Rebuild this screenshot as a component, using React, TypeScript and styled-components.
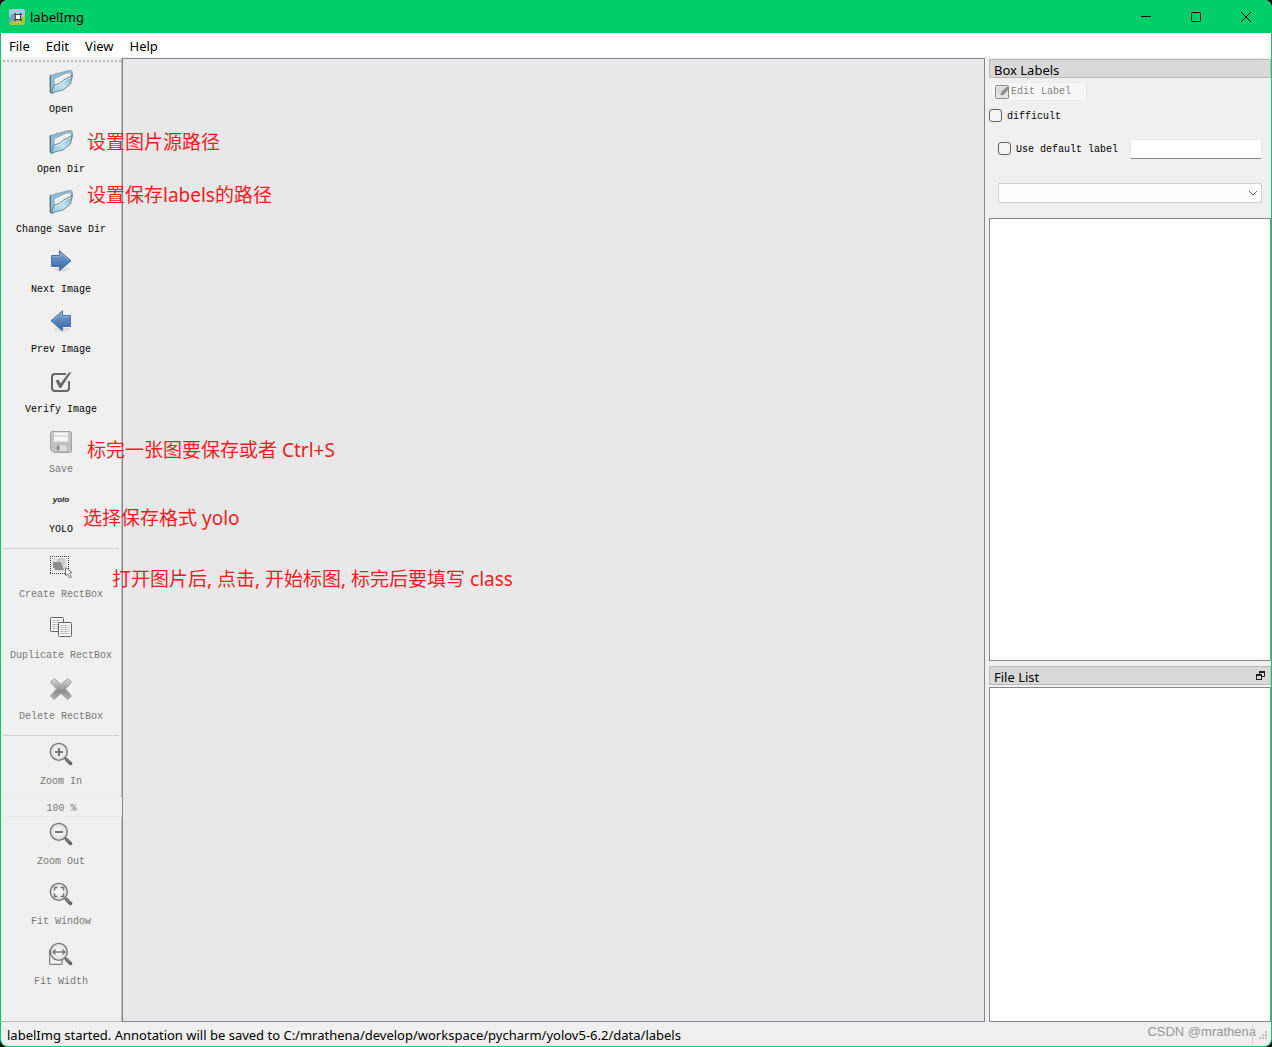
import React from "react";
import styled, { createGlobalStyle } from "styled-components";

const ui = `"Noto Sans", "Noto Sans CJK SC", sans-serif`;
const mono = `"Liberation Mono", "Noto Sans CJK SC", monospace`;
const accent = "#00ce6b";
const edge = "#828790";

const Global = createGlobalStyle`
  *, *::before, *::after { box-sizing: border-box; }
  body { margin: 0; background: #111; }
  button, input, select { margin: 0; font: inherit; color: inherit; }
`;

const Window = styled.div`
  position: relative;
  display: flex;
  flex-direction: column;
  min-height: 100vh;
  overflow: hidden;
  border: 1px solid ${accent};
  border-top: 0;
  border-radius: 8px;
  background: #f0f0f0;
  color: #000;
  font-family: ${ui};
  font-size: 13px;
  line-height: 18px;
`;

const TitleBar = styled.header`
  display: flex;
  align-items: center;
  height: 33px;
  padding-left: 8px;
  background: ${accent};
`;

const Title = styled.h1`
  flex: 1;
  margin: 0;
  padding: 1px 0 0 5px;
  font-size: 13px;
  font-weight: 400;
`;

const Caption = styled.button`
  display: flex;
  align-items: center;
  justify-content: center;
  width: 50px;
  height: 33px;
  padding: 0;
  border: 0;
  background: none;
`;

const MenuBar = styled.nav`
  display: flex;
  height: 25px;
  border-bottom: 1px solid #f4f4f4;
  background: #fff;
`;

const MenuItem = styled.button`
  padding: 1px 8px 0;
  border: 0;
  background: none;
`;

const Body = styled.div`
  display: flex;
  flex: 1;
`;

const ToolBar = styled.aside`
  display: flex;
  flex-direction: column;
  width: 121px;
  border-right: 1px solid #bcbcc0;
  border-bottom: 1px solid #bcbcc0;
`;

const Handle = styled.div`
  height: 2px;
  margin: 2px 0 3px 2px;
  background: repeating-linear-gradient(90deg, #bdbdbd 0 2px, transparent 2px 4px);
`;

const Group = styled.div<{ $gap?: number }>`
  display: flex;
  flex-direction: column;
  gap: ${(p) => p.$gap ?? 0}px;
`;

const Tool = styled.button`
  display: flex;
  flex-direction: column;
  align-items: center;
  gap: 10px;
  height: 60px;
  padding: 5px 0 9px;
  border: 0;
  background: none;
  color: #000;
  font-family: ${mono};
  font-size: 10px;
  line-height: 12px;
  white-space: nowrap;
  &:disabled { color: #787878; }
`;

const Separator = styled.hr`
  width: 116px;
  height: 1px;
  margin: 3px 0 1px 2px;
  border: 0;
  background: #cfcfcf;
`;

const Zoom = styled.input`
  width: 121px;
  height: 20px;
  padding: 2px 0 0;
  border: 1px solid #ebebeb;
  border-width: 1px 0;
  background: #f0f0f0;
  font-family: ${mono};
  font-size: 10px;
  text-align: center;
  &:disabled { color: #787878; }
`;

const Yolo = styled.span`
  height: 24px;
  font: italic 700 8px/20px "Liberation Sans", sans-serif;
  color: #222;
`;

const Canvas = styled.main`
  flex: 1;
  border: 1px solid ${edge};
  background: #e8e8e8;
`;

const Docks = styled.aside`
  display: flex;
  flex-direction: column;
  width: 286px;
  padding: 1px 0 0 4px;
`;

const DockTitle = styled.h2`
  display: flex;
  align-items: center;
  justify-content: space-between;
  height: 19px;
  margin: 0;
  padding: 3px 5px 0 4px;
  border: 1px solid #b9b9b9;
  background: #d9d9d9;
  font-size: 13px;
  font-weight: 400;
  line-height: 18px;
`;

const Float = styled.button`
  display: flex;
  padding: 0 0 3px;
  border: 0;
  background: none;
`;

const Form = styled.div`
  display: flex;
  flex-direction: column;
  align-items: flex-start;
  padding-top: 4px;
  font-family: ${mono};
  font-size: 10px;
  line-height: 16px;
`;

const EditButton = styled.button`
  display: flex;
  align-items: center;
  gap: 1px;
  width: 96px;
  height: 19px;
  margin-left: 2px;
  padding: 0 2px;
  border: 1px solid #ececec;
  border-radius: 3px;
  background: #f7f7f7;
  &:disabled { color: #838383; }
`;

const Check = styled.label`
  display: flex;
  align-items: flex-start;
  gap: 5px;
  padding-top: 2px;
`;

const Box = styled.input`
  appearance: none;
  width: 13px;
  height: 13px;
  border: 1px solid #626262;
  border-radius: 3px;
  background: #f5f5f5;
  &:checked { background: ${accent}; }
`;

const DifficultRow = styled.div`
  padding-top: 6px;
`;

const DefaultRow = styled.div`
  display: flex;
  align-items: center;
  gap: 12px;
  align-self: stretch;
  padding: 14px 9px 0;
`;

const LabelInput = styled.input`
  flex: 1;
  min-width: 0;
  height: 20px;
  border: 1px solid #ebebeb;
  border-bottom-color: #868686;
  border-radius: 2px;
  background: #fff;
`;

const ComboWrap = styled.div`
  display: grid;
  align-items: center;
  align-self: stretch;
  padding: 24px 9px 15px;
  & > * { grid-area: 1 / 1; }
  & > svg { justify-self: end; margin-right: 4px; pointer-events: none; }
`;

const Combo = styled.select`
  appearance: none;
  width: 100%;
  height: 20px;
  border: 1px solid #d0d0d0;
  border-radius: 2px;
  background: #fdfdfd;
`;

const List = styled.ul<{ $grow: number }>`
  flex: ${(p) => p.$grow} 1 0;
  margin: 0;
  padding: 0;
  border: 1px solid ${edge};
  background: #fff;
  list-style: none;
`;

const FileDock = styled.div`
  padding: 5px 0 2px;
`;

const StatusBar = styled.footer`
  display: flex;
  align-items: center;
  justify-content: space-between;
  height: 24px;
  padding: 2px 3px 0 6px;
`;

const Corner = styled.div`
  position: relative;
  display: flex;
  align-items: center;
  gap: 3px;
  &::before {
    content: "";
    position: absolute;
    right: 15px;
    top: 0;
    bottom: 0;
    width: 1px;
    background: #d4d4d4;
  }
`;

const Watermark = styled.span`
  padding-bottom: 6px;
  font: 13px/16px "Liberation Sans", sans-serif;
  color: #979797;
`;

const Note = styled.span`
  position: absolute;
  color: #ee1c24;
  font-family: "Noto Sans", "Noto Sans CJK SC", sans-serif;
  font-size: 19px;
  line-height: 26px;
  white-space: nowrap;
  pointer-events: none;
`;

const Svg = ({ children, size = 24 }: { children: React.ReactNode; size?: number }) => (
  <svg width={size} height={size} viewBox={`0 0 ${size} ${size}`} fill="none" aria-hidden="true">
    {children}
  </svg>
);

const HiddenDefs = styled.svg`
  position: absolute;
`;

const Defs = () => (
  <HiddenDefs width="0" height="0" aria-hidden="true">
    <defs>
      <linearGradient id="folder" x1="0" y1="1" x2="1" y2="0">
        <stop offset="0" stopColor="#8fc3dd" /><stop offset=".5" stopColor="#c2e2f0" /><stop offset="1" stopColor="#7fa9bf" />
      </linearGradient>
      <linearGradient id="arrow" x1="0" y1="0" x2="0" y2="1">
        <stop offset="0" stopColor="#80a5d6" /><stop offset="1" stopColor="#3465a4" />
      </linearGradient>
      <linearGradient id="metal" x1="0" y1="0" x2="0" y2="1">
        <stop offset="0" stopColor="#dadada" /><stop offset=".6" stopColor="#8c8c8c" /><stop offset="1" stopColor="#b8b8b8" />
      </linearGradient>
      <radialGradient id="lens"><stop offset="0" stopColor="#fff" /><stop offset="1" stopColor="#dcdcdc" /></radialGradient>
    </defs>
  </HiddenDefs>
);

const Folder = () => (
  <Svg>
    <path d="M1 5.500l4.500-1L7.500 3l1.500.5L19 .7l3.500 0 1 2-.5 4L3 23.500l-2-1.500z" fill="#8dbcd3" stroke="#6d8c9b" strokeWidth=".7" />
    <path d="M5.500 9L17 3.500l4.500-.5.5 4L5.500 17z" fill="#fff" stroke="#98a5ac" strokeWidth=".6" />
    <path d="M7 11.500L20 4.500M7 14L20 6.500" stroke="#cfd6da" strokeWidth=".8" />
    <path d="M2.500 23.200L5 15l5.500-1.500 4-3.500L23.500 5.500l-2 8.500-7.500 6-6.500 1.500z" fill="url(#folder)" stroke="#55747f" strokeWidth=".8" strokeLinejoin="round" />
    <path d="M6 16l5-1.500 4-3.500 7-3.700" stroke="#eaf7fc" strokeWidth=".8" />
    <path d="M1.300 5.500V22l1.500 1.500" stroke="#4d6874" />
  </Svg>
);

const Arrow = ({ back = false }: { back?: boolean }) => (
  <Svg>
    <ellipse cx="13" cy="19.500" rx="8" ry="2" fill="#ddd" />
    <g transform={back ? "matrix(-1 0 0 1 24 0)" : undefined}>
      <path d="M2.500 5.500h8V.8l11.500 10-11.500 10v-4.300h-8z" fill="url(#arrow)" stroke="#4b71a5" />
      <path d="M3.500 6.500h8V3l8.500 7.500" stroke="#9bbbe3" strokeWidth=".7" />
    </g>
  </Svg>
);

const Verify = () => (
  <Svg>
    <path d="M17 4H6Q3 4 3 7v11q0 3 3 3h11q3 0 3-3v-7" stroke="#666" strokeWidth="2" />
    <path d="M6.500 10.500l3-1 2 4L19.500 3l3-1-10.500 16h-1.500z" fill="#666" />
  </Svg>
);

const Disk = () => (
  <Svg>
    <path d="M2.500 1.500h19l1 1v19l-1 1h-17l-3-3v-17z" fill="#c4c4c4" stroke="#a2a2a2" />
    <path d="M5 2.500h14v9H5z" fill="#f6f6f6" />
    <path d="M5 5h14v2H5z" fill="#dedede" />
    <path d="M6 14.500h12.500v7H6z" fill="#dcdcdc" stroke="#aaa" strokeWidth=".7" />
    <path d="M7.500 15.500h3v5h-3z" fill="#888" />
  </Svg>
);

const CreateBox = () => (
  <Svg>
    <path d="M2 2h17v16H2z" fill="#fafafa" />
    <path d="M3 3h15v14H3z" fill="#e2e2e2" />
    <path d="M1 1.500h19M1 18.500h19M1.500 1v18M19.500 1v18" stroke="#333" strokeDasharray="1 1" />
    <circle cx="12" cy="7" r="3.500" fill="#d3d3d3" stroke="#b7b7b7" />
    <path d="M4 7h7v6H4zM10 7h2l3 8H6v-2z" fill="#8d8d8d" />
    <path d="M16.500 12.500v8l2-1.500 2 4 2-1-2-4 2.500-.5z" fill="#fff" stroke="#777" />
  </Svg>
);

const Copy = () => (
  <Svg>
    {[[1.5, 1.5], [9.5, 6.5]].map(([x, y]) => (
      <g key={x}>
        <rect x={x} y={y} width="13" height="14" rx="1" fill="#fafafa" stroke="#636363" />
        {[3, 5, 7, 9, 11].map((d) => (
          <path key={d} d={`M${x + 2} ${y + d}h9`} stroke="#adadad" strokeDasharray="3 1" />
        ))}
      </g>
    ))}
  </Svg>
);

const Delete = () => (
  <Svg>
    <path d="M5 1.500l7 6 7-6 3.500 3.500-6 7 6 7-3.500 3.500-7-6-7 6L1.500 19l6-7-6-7z" fill="url(#metal)" stroke="#a0a0a0" strokeLinejoin="round" />
  </Svg>
);

const Lens = ({ kind }: { kind: "in" | "out" | "window" | "width" }) => (
  <Svg>
    {kind === "width" && <path d="M3 8H.7v14.300H13V16" fill="#f5f5f5" stroke="#666" />}
    <path d="M15.500 15.500l2 2" stroke="#777" strokeWidth="2" />
    <path d="M17.500 17.500l4 4" stroke="#666" strokeWidth="3.500" strokeLinecap="round" />
    <path d="M17.500 17l3 3" stroke="#aaa" />
    <circle cx="9.800" cy="9.800" r="8.500" fill="url(#lens)" stroke="#717171" strokeWidth="1.300" />
    {kind === "in" && <path d="M6 10h8M10 6v8" stroke="#777" strokeWidth="2" />}
    {kind === "out" && <path d="M6 10h8" stroke="#777" strokeWidth="2" />}
    {kind === "window" && (
      <path d="M5.500 8.500v-3h3M11.500 5.500h3v3M14.500 11.500v3h-3M8.500 14.500h-3v-3" stroke="#777" strokeWidth="1.500" />
    )}
    {kind === "width" && <path d="M4 10h12M6.500 7.500L4 10l2.500 2.500M13.500 7.500L16 10l-2.500 2.500" stroke="#777" strokeWidth="1.300" />}
  </Svg>
);

const AppIcon = () => (
  <Svg size={16}>
    <rect width="16" height="16" rx="2" fill="#6a9ed0" />
    <path d="M0 2q0-2 2-2h12q2 0 2 2v6H0z" fill="#a8c8e7" />
    <path d="M0 14l5-3 4 1 7-6v8q0 2-2 2H2q-2 0-2-2z" fill="#a7c83d" />
    <path d="M2 5h4v5H2z" fill="#7f9cb0" />
    <rect x="6.500" y="5.500" width="5" height="5" fill="#fff" stroke="#444" />
    <path d="M5 4h2v2H5zM11 4h2v2h-2zM5 10h2v2H5zM11 10h2v2h-2z" fill="#555" />
  </Svg>
);

const PencilIcon = () => (
  <Svg size={16}>
    <rect x="1.500" y="1.500" width="13" height="13" rx="1" fill="#e5e5e5" stroke="#8b8b8b" />
    <path d="M3 4h7M3 6.500h5M3 9h3" stroke="#cfcfcf" />
    <path d="M7 11l.8-3L13 3l1.800 1.800-5 5.200z" fill="#999" stroke="#727272" strokeWidth=".8" />
  </Svg>
);

type ToolDef = [string, React.ReactNode, boolean?];

const fileTools: ToolDef[] = [
  ["Open", <Folder />],
  ["Open Dir", <Folder />],
  ["Change Save Dir", <Folder />],
  ["Next Image", <Arrow />],
  ["Prev Image", <Arrow back />],
  ["Verify Image", <Verify />],
  ["Save", <Disk />, true],
  ["YOLO", <Yolo>yolo</Yolo>],
];
const boxTools: ToolDef[] = [
  ["Create RectBox", <CreateBox />, true],
  ["Duplicate RectBox", <Copy />, true],
  ["Delete RectBox", <Delete />, true],
];
const zoomTools: ToolDef[] = [
  ["Zoom Out", <Lens kind="out" />, true],
  ["Fit Window", <Lens kind="window" />, true],
  ["Fit Width", <Lens kind="width" />, true],
];

const notes = [
  { x: 86, y: 129, text: "设置图片源路径" },
  { x: 86, y: 182, text: "设置保存labels的路径" },
  { x: 86, y: 437, text: "标完一张图要保存或者 Ctrl+S" },
  { x: 82, y: 505, text: "选择保存格式 yolo" },
  { x: 111, y: 566, text: "打开图片后, 点击, 开始标图, 标完后要填写 class" },
];

const Tools = ({ items, gap }: { items: ToolDef[]; gap?: number }) => (
  <Group $gap={gap}>
    {items.map(([label, icon, disabled]) => (
      <Tool key={label} disabled={disabled}>
        {icon}
        <span>{label}</span>
      </Tool>
    ))}
  </Group>
);

export default function App() {
  return (
    <>
      <Global />
      <Defs />
      <Window>
        <TitleBar>
          <AppIcon />
          <Title>labelImg</Title>
          <Caption aria-label="Minimize"><Svg size={12}><path d="M1 5.500h10" stroke="#000" /></Svg></Caption>
          <Caption aria-label="Maximize"><Svg size={12}><rect x="1.500" y="1.500" width="9" height="9" rx="1" stroke="#000" /></Svg></Caption>
          <Caption aria-label="Close"><Svg size={12}><path d="M1 1l10 10M11 1L1 11" stroke="#000" /></Svg></Caption>
        </TitleBar>
        <MenuBar>
          {["File", "Edit", "View", "Help"].map((m) => <MenuItem key={m}>{m}</MenuItem>)}
        </MenuBar>
        <Body>
          <ToolBar>
            <Handle />
            <Tools items={fileTools} />
            <Separator />
            <Tools items={boxTools} gap={1} />
            <Separator />
            <Tools items={[["Zoom In", <Lens kind="in" />, true]]} />
            <Zoom aria-label="Zoom level" defaultValue="100 %" disabled />
            <Tools items={zoomTools} />
          </ToolBar>
          <Canvas />
          <Docks>
            <DockTitle>Box Labels</DockTitle>
            <Form>
              <EditButton disabled><PencilIcon />Edit Label</EditButton>
              <DifficultRow>
                <Check><Box type="checkbox" />difficult</Check>
              </DifficultRow>
              <DefaultRow>
                <Check><Box type="checkbox" />Use default label</Check>
                <LabelInput aria-label="Default label" />
              </DefaultRow>
              <ComboWrap>
                <Combo aria-label="Label filter"><option value="" /></Combo>
                <Svg size={10}><path d="M1 3l4 4 4-4" stroke="#666" /></Svg>
              </ComboWrap>
            </Form>
            <List $grow={57} aria-label="Box labels" />
            <FileDock>
              <DockTitle>
                File List
                <Float aria-label="Float">
                  <Svg size={9}>
                    <path d="M3.500 3V1h5v4.500H6" stroke="#222" /><path d="M3 1h6" stroke="#222" strokeWidth="2" />
                    <rect x=".5" y="3.500" width="5" height="5" stroke="#222" /><path d="M0 4h6" stroke="#222" strokeWidth="2" />
                  </Svg>
                </Float>
              </DockTitle>
            </FileDock>
            <List $grow={43} aria-label="Files" />
          </Docks>
        </Body>
        <StatusBar>
          <span>labelImg started. Annotation will be saved to C:/mrathena/develop/workspace/pycharm/yolov5-6.2/data/labels</span>
          <Corner>
            <Watermark>CSDN @mrathena</Watermark>
            <Svg size={9}>
              <path d="M6 0h2v2H6zM3 3h2v2H3zM6 3h2v2H6zM0 6h2v2H0zM3 6h2v2H3zM6 6h2v2H6z" fill="#bcbcbc" />
            </Svg>
          </Corner>
        </StatusBar>
        {notes.map((n) => (
          <Note key={n.text} style={{ left: n.x, top: n.y }}>{n.text}</Note>
        ))}
      </Window>
    </>
  );
}
